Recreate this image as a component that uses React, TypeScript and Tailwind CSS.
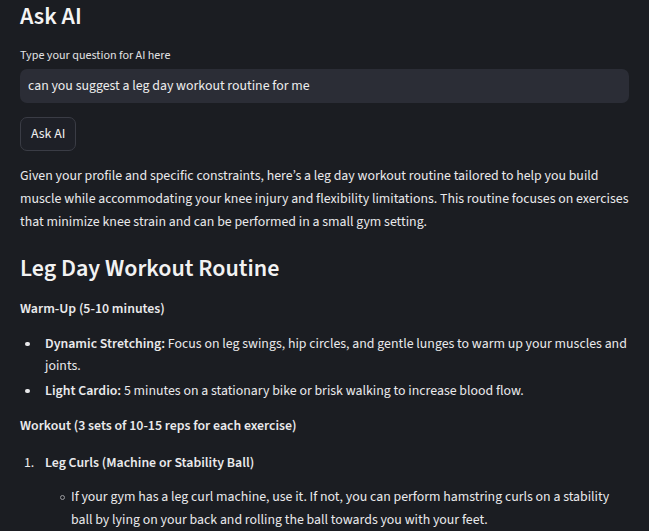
import React from "react";

function Dot() {
  return (
    <span className="w-[25px] shrink-0 h-[22.5px] flex items-center">
      <span className="ml-[5px] w-[4.5px] h-[4.5px] rounded-full bg-[#e8e8ea]" />
    </span>
  );
}

export default function App() {
  return (
    <div className="w-[649px] h-[531px] overflow-hidden bg-[#1b1d22] text-[#eaeaec] font-['Source_Sans_3','Source_Sans_Pro',sans-serif]">
      <div className="px-[20px]">
        <h1 className="text-[24px] font-semibold leading-[30px] pt-[2px] text-[#f4f4f4]">Ask AI</h1>
        <label className="block mt-[16px] text-[12.1px] leading-[16px] text-[#e2e2e4]">
          Type your question for AI here
        </label>
        <div className="mt-[5px] h-[34px] rounded-[7px] bg-[#2b2d36] flex items-center pl-[8px] text-[13.84px] text-[#eeeeee]">
          can you suggest a leg day workout routine for me
        </div>
        <button className="mt-[14px] h-[34px] px-[10px] rounded-[7px] border border-[#3a3c45] bg-[#1e2027] text-[13.84px] text-[#eeeeee] flex items-center justify-center">
          Ask AI
        </button>
        <p className="mt-[14px] text-[13.84px] leading-[23px]">
          Given your profile and specific constraints, here’s a leg day workout routine tailored to help you build
          muscle while accommodating your knee injury and flexibility limitations. This routine focuses on exercises
          that minimize knee strain and can be performed in a small gym setting.
        </p>
        <h2 className="mt-[20px] text-[24px] font-semibold leading-[30px] text-[#f2f2f2]">Leg Day Workout Routine</h2>
        <p className="mt-[14px] text-[13.84px] font-semibold leading-[22.5px]">Warm-Up (5-10 minutes)</p>
        <ul className="mt-[12px] text-[13.84px] leading-[22.5px]">
          <li className="flex">
            <Dot />
            <span>
              <b className="font-semibold">Dynamic Stretching:</b> Focus on leg swings, hip circles, and gentle lunges to
              warm up your muscles and joints.
            </span>
          </li>
          <li className="flex mt-[2px]">
            <Dot />
            <span>
              <b className="font-semibold">Light Cardio:</b> 5 minutes on a stationary bike or brisk walking to increase
              blood flow.
            </span>
          </li>
        </ul>
        <p className="mt-[13px] text-[13.84px] font-semibold leading-[22.5px]">
          Workout (3 sets of 10-15 reps for each exercise)
        </p>
        <ol className="mt-[14px] text-[13.84px] leading-[22.5px]">
          <li>
            <div className="flex">
              <span className="w-[25px] shrink-0 pl-[4px]">1.</span>
              <b className="font-semibold">Leg Curls (Machine or Stability Ball)</b>
            </div>
            <div className="flex mt-[12px] pl-[26px]">
              <span className="w-[25px] shrink-0 h-[23px] flex items-center">
                <span className="ml-[14px] w-[5px] h-[5px] rounded-full border border-[#9a9a9e]" />
              </span>
              <span className="leading-[23px]">
                If your gym has a leg curl machine, use it. If not, you can perform hamstring curls on a stability ball
                by lying on your back and rolling the ball towards you with your feet.
              </span>
            </div>
          </li>
        </ol>
      </div>
    </div>
  );
}
